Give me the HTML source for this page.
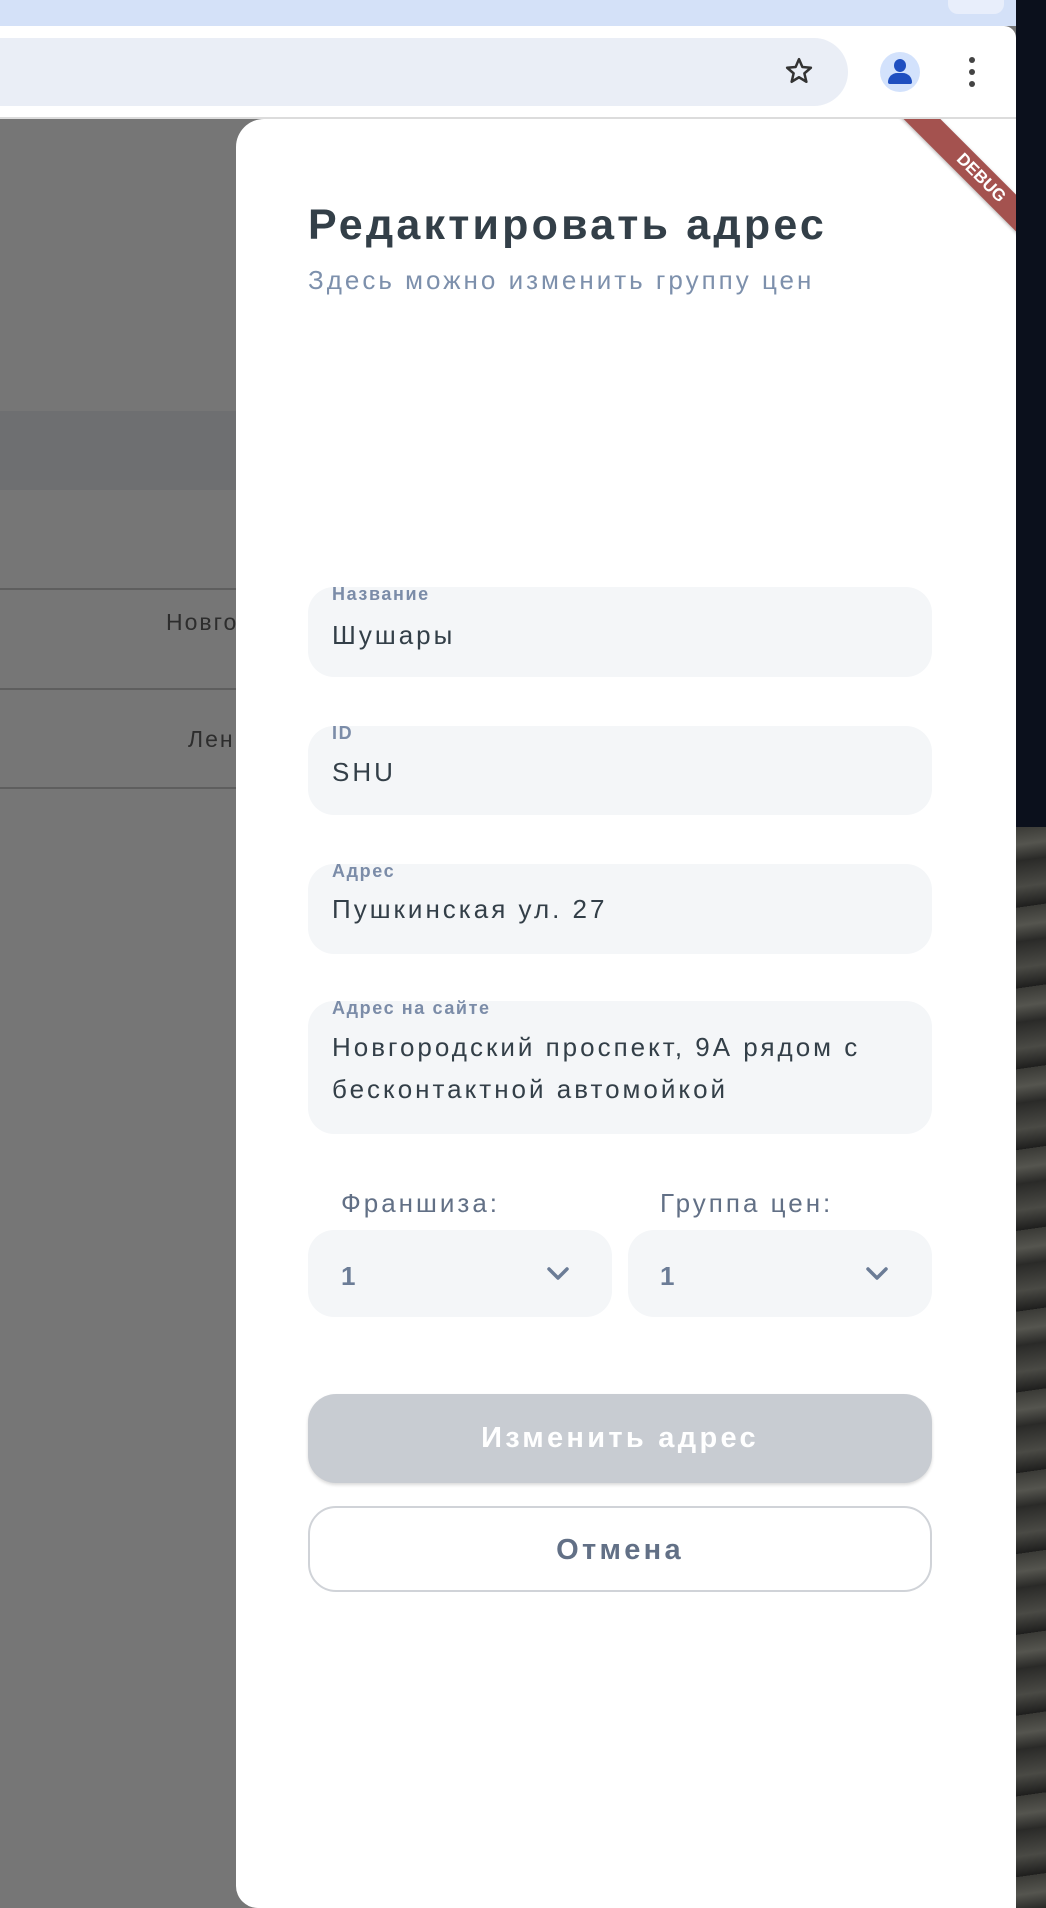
<!DOCTYPE html>
<html><head><meta charset="utf-8"><style>
*{margin:0;padding:0;box-sizing:border-box}
body{width:1046px;height:1908px;position:relative;overflow:hidden;background:#767676;font-family:"Liberation Sans","Noto Sans CJK SC",sans-serif}
.abs{position:absolute}
.field{position:absolute;left:308px;width:624px;background:#f4f6f8;border-radius:26px}
.lbl{position:absolute;left:24px;top:-3px;font-size:18px;font-weight:bold;color:#7b8ca8;letter-spacing:1.6px}
.val{position:absolute;left:24px;font-size:26px;color:#333f48;line-height:42px;letter-spacing:3px}
</style></head><body>
<div class="abs" style="left:1016px;top:0;width:30px;height:1908px;background:#0b101c"></div>
<div class="abs" style="left:1016px;top:827px;width:30px;height:1081px;background:repeating-linear-gradient(172deg,#3a3a36 0,#55554f 18px,#2a2a28 34px,#4a4a45 60px,#1e1e1d 80px)"></div>
<div class="abs" style="left:0;top:0;width:1016px;height:26px;background:#d4e1f8"></div>
<div class="abs" style="left:948px;top:-10px;width:56px;height:24px;background:#e8eefb;border-radius:10px"></div>
<div class="abs" style="left:0;top:26px;width:1016px;height:92px;background:#fff;border-radius:0 12px 0 0"></div>
<div class="abs" style="left:0;top:117px;width:1016px;height:2px;background:#dcdcdc"></div>
<div class="abs" style="left:-40px;top:38px;width:888px;height:68px;background:#eaeef6;border-radius:34px"></div>
<svg class="abs" style="left:784px;top:56px" width="30" height="30" viewBox="0 0 24 24"><path d="M12 2.5l2.7 6.3 6.8.6-5.2 4.5 1.6 6.7L12 17l-5.9 3.6 1.6-6.7L2.5 9.4l6.8-.6z" fill="none" stroke="#333" stroke-width="2" stroke-linejoin="round"/></svg>
<div class="abs" style="left:880px;top:52px;width:40px;height:40px;border-radius:50%;background:#d3e2fc"></div>
<div class="abs" style="left:894px;top:59px;width:12px;height:13px;border-radius:50%;background:#1f4fc0"></div>
<div class="abs" style="left:888px;top:73px;width:24px;height:11px;border-radius:10px 10px 2px 2px;background:#1f4fc0"></div>
<div class="abs" style="left:969px;top:57px;width:6px;height:6px;border-radius:50%;background:#444"></div>
<div class="abs" style="left:969px;top:69px;width:6px;height:6px;border-radius:50%;background:#444"></div>
<div class="abs" style="left:969px;top:81px;width:6px;height:6px;border-radius:50%;background:#444"></div>
<div class="abs" style="left:0;top:411px;width:236px;height:79px;background:#6e6f71"></div>
<div class="abs" style="left:0;top:588px;width:236px;height:2px;background:#5e5e5e"></div>
<div class="abs" style="left:0;top:688px;width:236px;height:2px;background:#5e5e5e"></div>
<div class="abs" style="left:0;top:787px;width:236px;height:2px;background:#5e5e5e"></div>
<div class="abs" style="left:166px;top:609px;font-size:23px;color:#2d2d2d;letter-spacing:2px">Новгородский</div>
<div class="abs" style="left:188px;top:726px;font-size:23px;color:#2d2d2d;letter-spacing:2px">Ленинский</div>
<div class="abs" style="left:236px;top:119px;width:780px;height:1789px;background:#fff;border-radius:28px 0 0 22px;overflow:hidden">
 <div class="abs" style="left:630px;top:46px;width:230px;height:26px;background:#a4524f;transform:rotate(45deg);color:#fff;font-weight:bold;font-size:17px;text-align:center;line-height:26px;box-shadow:0 1px 3px rgba(0,0,0,.3)">DEBUG</div>
</div>
<div class="abs" style="left:308px;top:201px;font-size:43px;font-weight:bold;color:#333f48;letter-spacing:3.2px">Редактировать адрес</div>
<div class="abs" style="left:308px;top:265px;font-size:26px;color:#7d90ac;letter-spacing:3px">Здесь можно изменить группу цен</div>

<div class="field" style="top:587px;height:90px"><div class="lbl">Название</div><div class="val" style="top:27px">Шушары</div></div>
<div class="field" style="top:726px;height:89px"><div class="lbl">ID</div><div class="val" style="top:25px">SHU</div></div>
<div class="field" style="top:864px;height:90px"><div class="lbl">Адрес</div><div class="val" style="top:24px">Пушкинская ул. 27</div></div>
<div class="field" style="top:1001px;height:133px"><div class="lbl">Адрес на сайте</div><div class="val" style="top:25px">Новгородский проспект, 9А рядом с<br>бесконтактной автомойкой</div></div>

<div class="abs" style="left:341px;top:1188px;font-size:26px;color:#627086;letter-spacing:3px">Франшиза:</div>
<div class="abs" style="left:660px;top:1188px;font-size:26px;color:#627086;letter-spacing:3px">Группа цен:</div>
<div class="field" style="top:1230px;width:304px;height:87px"><div class="abs" style="left:33px;top:31px;font-size:26px;font-weight:bold;color:#6b7c96">1</div>
<svg class="abs" style="left:236px;top:34px" width="28" height="20" viewBox="0 0 28 20"><path d="M5 5l9 9 9-9" fill="none" stroke="#6b7c96" stroke-width="3.5" stroke-linecap="round" stroke-linejoin="round"/></svg></div>
<div class="field" style="top:1230px;left:628px;width:304px;height:87px"><div class="abs" style="left:32px;top:31px;font-size:26px;font-weight:bold;color:#6b7c96">1</div>
<svg class="abs" style="left:235px;top:34px" width="28" height="20" viewBox="0 0 28 20"><path d="M5 5l9 9 9-9" fill="none" stroke="#6b7c96" stroke-width="3.5" stroke-linecap="round" stroke-linejoin="round"/></svg></div>

<div class="abs" style="left:308px;top:1394px;width:624px;height:89px;background:#c8ccd2;border-radius:28px;box-shadow:0 2px 3px rgba(0,0,0,.15);color:#fff;font-weight:bold;font-size:29px;text-align:center;line-height:89px;letter-spacing:3.3px">Изменить адрес</div>
<div class="abs" style="left:308px;top:1506px;width:624px;height:86px;border:2px solid #d0d3d8;border-radius:28px;color:#627086;font-weight:bold;font-size:29px;text-align:center;line-height:84px;letter-spacing:3.3px">Отмена</div>
</body></html>
